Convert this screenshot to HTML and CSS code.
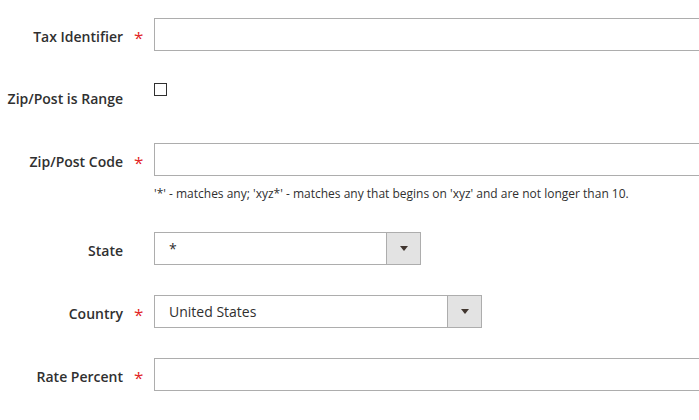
FILE: index.html
```html
<!doctype html>
<html>
  <head>
    <title>Tax Rate</title>
    <link rel="stylesheet" href="styles.css">
  </head>
  <body>
    <div class="fieldset">
      <div class="field">
        <label class="label">Tax Identifier</label>
        <span class="req">*</span>
        <div class="control"><input class="input" type="text"></div>
      </div>

      <div class="field field-check">
        <label class="label">Zip/Post is Range</label>
        <span class="req"></span>
        <div class="control"><span class="checkbox"></span></div>
      </div>

      <div class="field">
        <label class="label">Zip/Post Code</label>
        <span class="req">*</span>
        <div class="control">
          <input class="input" type="text">
          <div class="note">'*' - matches any; 'xyz*' - matches any that begins on 'xyz' and are not longer than 10.</div>
        </div>
      </div>

      <div class="field">
        <label class="label">State</label>
        <span class="req"></span>
        <div class="control">
          <div class="select select-state">
            <span class="select-value">*</span>
            <span class="select-arrow"></span>
          </div>
        </div>
      </div>

      <div class="field">
        <label class="label">Country</label>
        <span class="req">*</span>
        <div class="control">
          <div class="select select-country">
            <span class="select-value">United States</span>
            <span class="select-arrow"></span>
          </div>
        </div>
      </div>

      <div class="field">
        <label class="label">Rate Percent</label>
        <span class="req">*</span>
        <div class="control"><input class="input" type="text"></div>
      </div>
    </div>
  </body>
</html>
```

FILE: styles.css
```css
body {
  margin: 0;
  overflow: hidden;
  font-family: "Open Sans", "Liberation Sans", sans-serif;
  color: #303030;
  background: #fff;
}
.fieldset {
  padding-top: 18px;
}
.field {
  display: grid;
  grid-template-columns: 123px 31px 620px;
  margin-bottom: 30px;
}
.label {
  text-align: right;
  font-size: 14px;
  font-weight: 600;
  line-height: 19px;
  padding-top: 9px;
}
.field-check .label {
  padding-top: 8px;
}
.req {
  color: #e22626;
  font-size: 17px;
  line-height: 19px;
  padding-top: 10px;
  padding-left: 11px;
}
.input {
  display: block;
  box-sizing: border-box;
  width: 100%;
  height: 33px;
  margin: 0;
  border: 1px solid #adadad;
  border-radius: 0;
  background: #fff;
  font-family: inherit;
  font-size: 14px;
}
.checkbox {
  display: block;
  box-sizing: border-box;
  width: 13px;
  height: 13px;
  margin-top: 2px;
  border: 1px solid #303030;
  background: #fff;
}
.field-check .control {
  height: 32px;
}
.note {
  margin-top: 10px;
  font-size: 12px;
  line-height: 16px;
}
.select {
  display: flex;
  box-sizing: border-box;
  height: 33px;
  border: 1px solid #adadad;
  background: #fff;
}
.select-state {
  width: 267px;
}
.select-country {
  width: 328px;
}
.select-value {
  flex: 1;
  padding-left: 14px;
  font-size: 14px;
  line-height: 31px;
}
.select-arrow {
  display: flex;
  align-items: center;
  justify-content: center;
  width: 33px;
  border-left: 1px solid #adadad;
  background: #e3e3e3;
}
.select-arrow::after {
  content: "";
  border-left: 4px solid transparent;
  border-right: 4px solid transparent;
  border-top: 5px solid #41362f;
}
```
